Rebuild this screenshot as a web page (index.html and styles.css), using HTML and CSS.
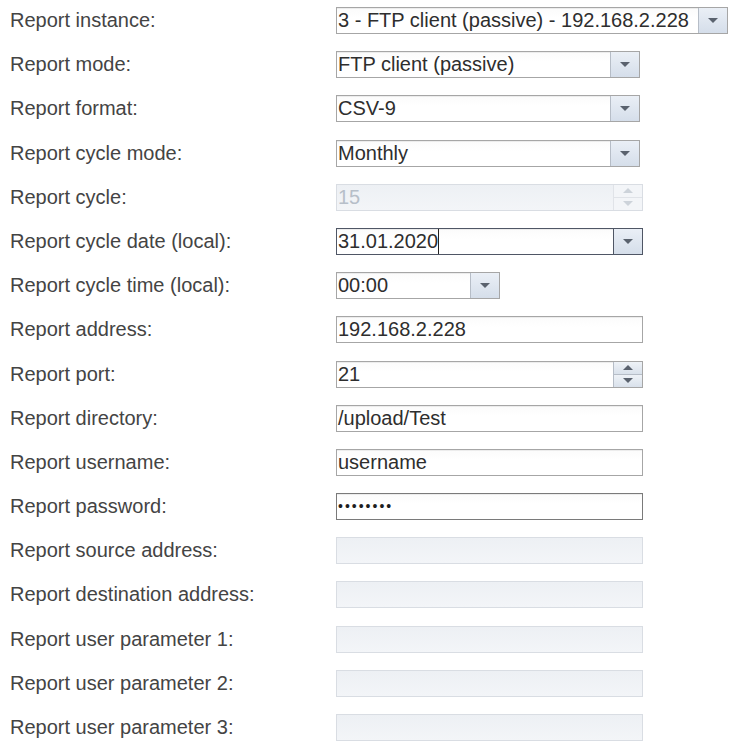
FILE: index.html
```html
<!DOCTYPE html>
<html>
<head>
<meta charset="utf-8">
<link rel="stylesheet" href="styles.css">
</head>
<body>
<div class="form">
  <div class="label">Report instance:</div>
  <div class="field w-wide"><span class="val">3 - FTP client (passive) - 192.168.2.228</span><span class="btn"><i class="tri-down"></i></span></div>

  <div class="label">Report mode:</div>
  <div class="field w-mid"><span class="val">FTP client (passive)</span><span class="btn"><i class="tri-down"></i></span></div>

  <div class="label">Report format:</div>
  <div class="field w-mid"><span class="val">CSV-9</span><span class="btn"><i class="tri-down"></i></span></div>

  <div class="label">Report cycle mode:</div>
  <div class="field w-mid"><span class="val">Monthly</span><span class="btn"><i class="tri-down"></i></span></div>

  <div class="label">Report cycle:</div>
  <div class="field w-full disabled"><span class="val">15</span><span class="spin"><span class="half"><i class="tri-up"></i></span><span class="half"><i class="tri-down"></i></span></span></div>

  <div class="label">Report cycle date (local):</div>
  <div class="field w-full focused"><span class="val"><span class="caret">31.01.2020</span></span><span class="btn"><i class="tri-down"></i></span></div>

  <div class="label">Report cycle time (local):</div>
  <div class="field w-small"><span class="val">00:00</span><span class="btn"><i class="tri-down"></i></span></div>

  <div class="label">Report address:</div>
  <div class="field w-full"><span class="val">192.168.2.228</span></div>

  <div class="label">Report port:</div>
  <div class="field w-full"><span class="val">21</span><span class="spin"><span class="half"><i class="tri-up"></i></span><span class="half"><i class="tri-down"></i></span></span></div>

  <div class="label">Report directory:</div>
  <div class="field w-full"><span class="val">/upload/Test</span></div>

  <div class="label">Report username:</div>
  <div class="field w-full"><span class="val">username</span></div>

  <div class="label">Report password:</div>
  <div class="field w-full pass"><span class="val">••••••••</span></div>

  <div class="label">Report source address:</div>
  <div class="field w-full disabled"><span class="val"></span></div>

  <div class="label">Report destination address:</div>
  <div class="field w-full disabled"><span class="val"></span></div>

  <div class="label">Report user parameter 1:</div>
  <div class="field w-full disabled"><span class="val"></span></div>

  <div class="label">Report user parameter 2:</div>
  <div class="field w-full disabled"><span class="val"></span></div>

  <div class="label">Report user parameter 3:</div>
  <div class="field w-full disabled"><span class="val"></span></div>
</div>
</body>
</html>
```

FILE: styles.css
```css
html, body {
  margin: 0;
  background: #ffffff;
}
body {
  font-family: "Liberation Sans", Arial, sans-serif;
  font-size: 20px;
  color: #444444;
  overflow: hidden;
}
.form {
  display: grid;
  grid-template-columns: 326px auto;
  row-gap: 17.2px;
  padding: 7px 0 0 10px;
  justify-items: start;
  align-items: center;
}
.label {
  line-height: 27px;
  white-space: nowrap;
}
.field {
  height: 27px;
  box-sizing: border-box;
  border: 1px solid #a6a6a6;
  background: linear-gradient(#fbfbfb, #ffffff 40%);
  box-shadow: inset 0 1px 0 #ececec;
  display: flex;
  align-items: stretch;
}
.val {
  flex: 1;
  padding-left: 1px;
  line-height: 25px;
  white-space: nowrap;
  overflow: hidden;
  color: #2e2e2e;
}
.w-wide { width: 392px; }
.w-mid { width: 304px; }
.w-full { width: 307px; }
.w-small { width: 164px; }

.btn {
  width: 28px;
  border-left: 1px solid #b6bdc7;
  background: linear-gradient(#eaeff6, #d5deea);
  display: flex;
  align-items: center;
  justify-content: center;
}
.tri-down {
  width: 0;
  height: 0;
  border-left: 5px solid transparent;
  border-right: 5px solid transparent;
  border-top: 5px solid #5a626e;
}
.tri-up {
  width: 0;
  height: 0;
  border-left: 5px solid transparent;
  border-right: 5px solid transparent;
  border-bottom: 5px solid #5a626e;
}
.spin {
  width: 28px;
  border-left: 1px solid #b6bdc7;
  display: flex;
  flex-direction: column;
}
.half {
  flex: 1;
  display: flex;
  align-items: center;
  justify-content: center;
  background: linear-gradient(#eef2f7, #d9e1eb);
}
.half + .half {
  border-top: 1px solid #b6bdc7;
}

.focused {
  border-color: #4f5665;
}
.focused .btn {
  border-left-color: #4f5665;
}
.caret {
  display: inline-block;
  border-right: 1px solid #222;
  line-height: 25px;
}
.pass {
  border-color: #7a7a7a;
}
.pass .val {
  color: #1e1e1e;
  font-size: 14px;
  letter-spacing: 2px;
  padding-left: 1px;
}

.disabled {
  border-color: #d9dde3;
  background: linear-gradient(#edf0f4, #f3f5f8);
  box-shadow: none;
}
.disabled .val {
  color: #b7bfc9;
}
.disabled .spin {
  border-left-color: #e0e3e8;
}
.disabled .half {
  background: #f3f5f8;
}
.disabled .half + .half {
  border-top-color: #e0e3e8;
}
.disabled .tri-up { border-bottom-color: #cdd3da; }
.disabled .tri-down { border-top-color: #cdd3da; }
```
